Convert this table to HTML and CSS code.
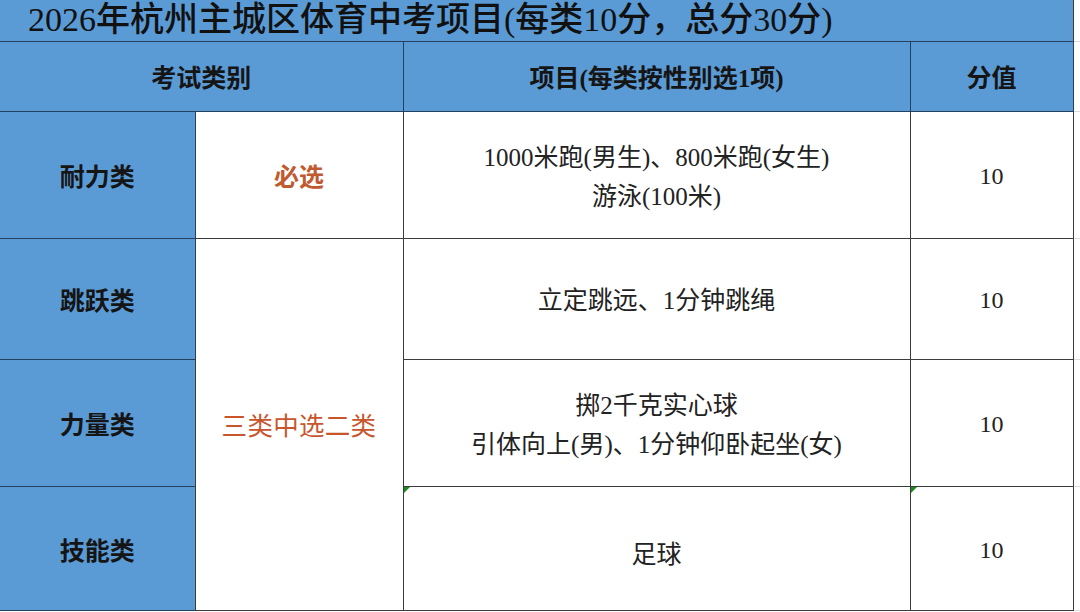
FILE: index.html
```html
<!DOCTYPE html>
<html lang="zh-CN">
<head>
<meta charset="utf-8">
<title>2026年杭州主城区体育中考项目</title>
<link rel="stylesheet" href="styles.css">
</head>
<body>
<table class="sheet">
  <colgroup>
    <col class="c1"><col class="c2"><col class="c3"><col class="c4"><col class="c5">
  </colgroup>
  <tr class="r-title">
    <td class="title" colspan="4">2026年杭州主城区体育中考项目(每类10分，总分30分)</td>
    <td class="gutter"></td>
  </tr>
  <tr class="r-head">
    <th class="head" colspan="2">考试类别</th>
    <th class="head">项目(每类按性别选1项)</th>
    <th class="head">分值</th>
    <td class="gutter"></td>
  </tr>
  <tr class="r1">
    <td class="cat">耐力类</td>
    <td class="req">必选</td>
    <td class="item">1000米跑(男生)、800米跑(女生)<br>游泳(100米)</td>
    <td class="score">10</td>
    <td class="gutter"></td>
  </tr>
  <tr class="r2">
    <td class="cat">跳跃类</td>
    <td class="choice" rowspan="3">三类中选二类</td>
    <td class="item">立定跳远、1分钟跳绳</td>
    <td class="score">10</td>
    <td class="gutter"></td>
  </tr>
  <tr class="r3">
    <td class="cat">力量类</td>
    <td class="item">掷2千克实心球<br>引体向上(男)、1分钟仰卧起坐(女)</td>
    <td class="score">10</td>
    <td class="gutter"></td>
  </tr>
  <tr class="r4">
    <td class="cat">技能类</td>
    <td class="item flag"><span class="mark"></span><span class="low">足球</span></td>
    <td class="score flag"><span class="mark"></span>10</td>
    <td class="gutter"></td>
  </tr>
</table>
</body>
</html>
```
FILE: styles.css
```css
html, body {
  margin: 0;
  padding: 0;
  background: #ffffff;
}

body {
  width: 1080px;
  height: 612px;
  overflow: hidden;
  font-family: "Liberation Serif", "Noto Sans CJK SC", serif;
  color: #1e1e1e;
}

.sheet {
  border-collapse: collapse;
  table-layout: fixed;
  width: 1080px;
}

.c1 { width: 195px; }
.c2 { width: 208px; }
.c3 { width: 507px; }
.c4 { width: 163px; }
.c5 { width: 7px; }

.sheet td, .sheet th {
  border: 1.5px solid #3c3c3c;
  padding: 4px 0 0 0;
  text-align: center;
  vertical-align: middle;
  font-size: 25px;
  line-height: 39px;
}

.r-title { height: 41px; }
.r-head { height: 70px; }
.r1 { height: 127px; }
.r2 { height: 121px; }
.r3 { height: 127px; }
.r4 { height: 124px; }

.sheet .title {
  background: #5b9bd5;
  border-top: none;
  border-left: none;
  border-bottom-color: #23405e;
  text-align: left;
  padding: 0 0 0 28px;
  font-size: 34px;
  line-height: 39px;
  font-weight: 500;
  color: #111111;
  vertical-align: top;
  white-space: nowrap;
}

.sheet .head {
  background: #5b9bd5;
  border-color: #23405e;
  font-weight: 700;
  color: #151515;
}

.sheet .head:first-child { border-left: none; }

.sheet .cat {
  background: #5b9bd5;
  border-left: none;
  border-color: #23405e;
  font-weight: 700;
  color: #151515;
  padding-top: 6px;
}

.sheet .req {
  color: #c05a30;
  font-weight: 700;
  padding-top: 6px;
}

.sheet .choice {
  color: #c8552c;
  font-size: 25.5px;
  letter-spacing: 0.3px;
}

.sheet .item {
  color: #222222;
}

.sheet .score {
  color: #222222;
  font-size: 24px;
}

.sheet .gutter {
  border-left: 1.5px solid #3c3c3c;
  border-right: none;
  border-top: none;
  border-bottom: 1px solid #dcdcdc;
  background: #ffffff;
  padding: 0;
}

.flag { position: relative; }

.mark {
  position: absolute;
  left: 0;
  top: 0;
  width: 0;
  height: 0;
  border-top: 6px solid #1a8a1a;
  border-right: 6px solid transparent;
}

.low {
  position: relative;
  top: 4px;
}
```
